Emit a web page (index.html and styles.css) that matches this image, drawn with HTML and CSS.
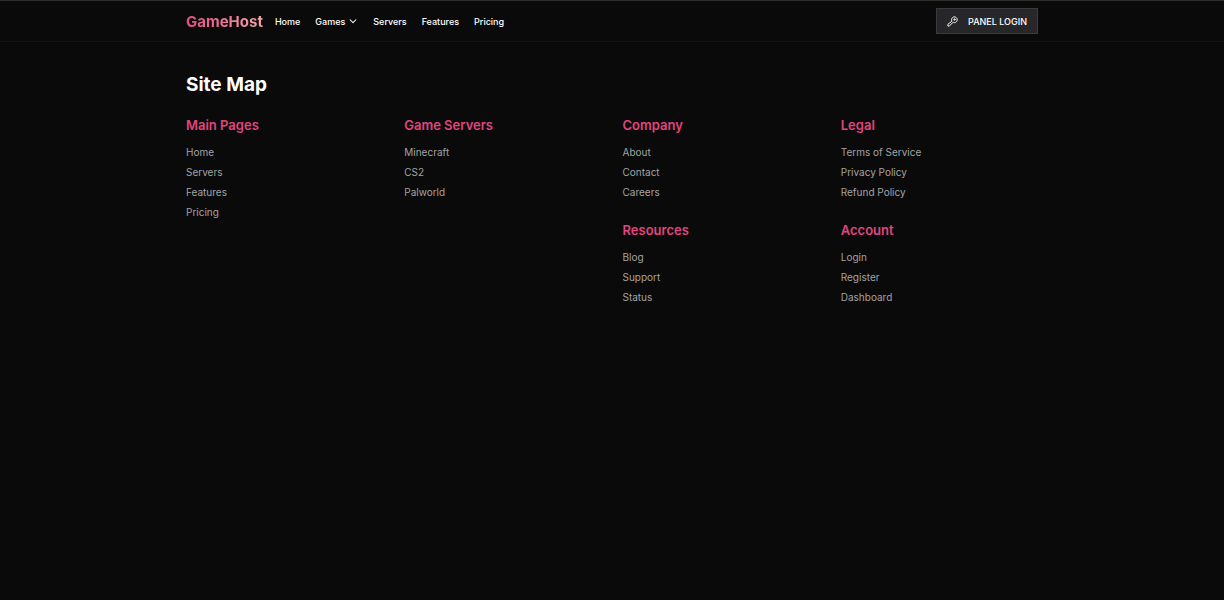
FILE: index.html
```html
<!DOCTYPE html>
<html lang="en">
<head>
    <meta charset="UTF-8">
    <meta name="viewport" content="width=device-width, initial-scale=1.0">
    <title>Site Map - GameHost</title>
    <link rel="stylesheet" href="styles.css">
</head>
<body>
    <header class="header">
        <div class="container header-inner">
            <a href="#" class="logo">GameHost</a>
            <nav class="nav">
                <a href="#">Home</a>
                <button type="button" class="nav-dropdown">
                    Games
                    <svg class="chevron" viewBox="0 0 24 24" fill="none" stroke="currentColor" stroke-width="2.500" stroke-linecap="round" stroke-linejoin="round"><path d="m5 9 7 7 7-7"/></svg>
                </button>
                <a href="#">Servers</a>
                <a href="#">Features</a>
                <a href="#">Pricing</a>
            </nav>
            <a href="#" class="login-btn">
                <svg class="key" viewBox="0 0 24 24" fill="none" stroke="currentColor" stroke-width="2" stroke-linecap="round" stroke-linejoin="round"><path d="M10.300 10.800A6.300 6.300 0 1 1 13.600 14L11.500 15.200 5.200 22H2V18.800z"/><circle cx="16.300" cy="7.700" r="1.500"/></svg>
                PANEL LOGIN
            </a>
        </div>
    </header>

    <main class="container main">
        <h1>Site Map</h1>
        <div class="sitemap">
            <div class="column">
                <section>
                    <h2>Main Pages</h2>
                    <ul>
                        <li><a href="#">Home</a></li>
                        <li><a href="#">Servers</a></li>
                        <li><a href="#">Features</a></li>
                        <li><a href="#">Pricing</a></li>
                    </ul>
                </section>
            </div>
            <div class="column">
                <section>
                    <h2>Game Servers</h2>
                    <ul>
                        <li><a href="#">Minecraft</a></li>
                        <li><a href="#">CS2</a></li>
                        <li><a href="#">Palworld</a></li>
                    </ul>
                </section>
            </div>
            <div class="column">
                <section>
                    <h2>Company</h2>
                    <ul>
                        <li><a href="#">About</a></li>
                        <li><a href="#">Contact</a></li>
                        <li><a href="#">Careers</a></li>
                    </ul>
                </section>
                <section>
                    <h2>Resources</h2>
                    <ul>
                        <li><a href="#">Blog</a></li>
                        <li><a href="#">Support</a></li>
                        <li><a href="#">Status</a></li>
                    </ul>
                </section>
            </div>
            <div class="column">
                <section>
                    <h2>Legal</h2>
                    <ul>
                        <li><a href="#">Terms of Service</a></li>
                        <li><a href="#">Privacy Policy</a></li>
                        <li><a href="#">Refund Policy</a></li>
                    </ul>
                </section>
                <section>
                    <h2>Account</h2>
                    <ul>
                        <li><a href="#">Login</a></li>
                        <li><a href="#">Register</a></li>
                        <li><a href="#">Dashboard</a></li>
                    </ul>
                </section>
            </div>
        </div>
    </main>
</body>
</html>
```
FILE: styles.css
```css
* {
    box-sizing: border-box;
}

body {
    margin: 0;
    background: #0a0a0a;
    color: #fff;
    font-family: Inter, "Liberation Sans", sans-serif;
    font-size: 10px;
    line-height: 16px;
}

a {
    color: inherit;
    text-decoration: none;
}

.container {
    max-width: 892px;
    margin: 0 auto;
    padding: 0 20px;
}

/* Header */
.header {
    border-top: 1px solid #332e2e;
    border-bottom: 1px solid #141414;
}

.header-inner {
    display: flex;
    align-items: center;
    gap: 12px;
    padding-top: 7px;
    padding-bottom: 7px;
}

.logo {
    font-size: 15px;
    font-weight: 700;
    line-height: 21px;
    background: linear-gradient(to right, #e64a86, #f5a3a8);
    -webkit-background-clip: text;
    background-clip: text;
    color: transparent;
}

.nav {
    display: flex;
    align-items: center;
    gap: 15px;
    font-size: 9px;
    font-weight: 500;
    line-height: 15px;
}

.nav-dropdown {
    display: flex;
    align-items: center;
    gap: 3px;
    padding: 0;
    border: none;
    background: none;
    color: inherit;
    font: inherit;
    cursor: pointer;
}

.chevron {
    width: 10px;
    height: 10px;
}

.login-btn {
    display: flex;
    align-items: center;
    gap: 10px;
    height: 26px;
    margin-left: auto;
    padding: 0 10px;
    background: #27272a;
    border: 1px solid #3a3a3e;
    font-size: 9px;
    font-weight: 500;
    line-height: 15px;
}

.key {
    width: 11px;
    height: 11px;
}

/* Site map */
.main {
    padding-top: 31px;
    padding-bottom: 31px;
}

h1 {
    margin: 0 0 19px;
    font-size: 19px;
    font-weight: 700;
    line-height: 24px;
}

h2 {
    margin: 0 0 10px;
    color: #e0457f;
    font-size: 13px;
    font-weight: 600;
    line-height: 18px;
}

.sitemap {
    display: grid;
    grid-template-columns: repeat(4, 1fr);
    gap: 21px;
}

.column {
    display: flex;
    flex-direction: column;
    gap: 21px;
}

ul {
    display: flex;
    flex-direction: column;
    gap: 4px;
    margin: 0;
    padding: 0;
    list-style: none;
    color: #a3a3a3;
}

a:hover {
    color: #ec4887;
}
```
